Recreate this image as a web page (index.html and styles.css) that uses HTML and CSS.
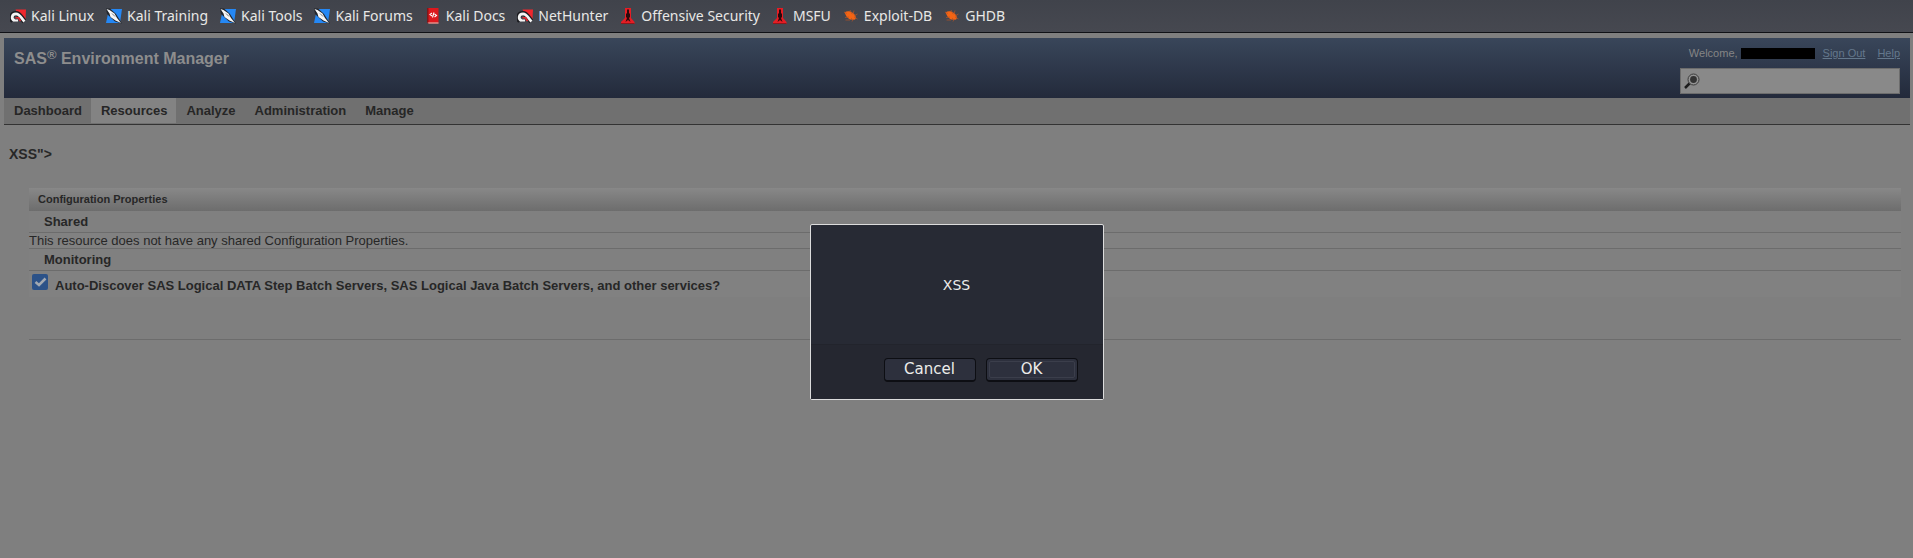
FILE: index.html
```html
<!DOCTYPE html>
<html lang="en">
<head>
<meta charset="utf-8">
<title>SAS Environment Manager</title>
<link rel="stylesheet" href="styles.css">
</head>
<body>
<svg class="defs" aria-hidden="true">
  <symbol id="i-magnet" viewBox="0 0 16 16">
    <path d="M5.500 1.500H16L15.500 11L12 14Z" fill="#f0272d"/>
    <path d="M3 13C.5 10.500 1.500 5.500 6 5.500C10 5.500 11 10 14.500 13.500" fill="none" stroke="#1b1b1f" stroke-width="5"/>
    <path d="M4.500 12.500C1 11 1.500 6 6 5.800C10 5.800 11 10 14.500 13.500" fill="none" stroke="#f4f4f4" stroke-width="2.800"/>
    <path d="M4 12.500H8" stroke="#f4f4f4" stroke-width="2"/>
    <path d="M5.500 9.800H8.500L10.500 13" fill="none" stroke="#e8252b" stroke-width="1.600"/>
  </symbol>
  <symbol id="i-knife" viewBox="0 0 16 16">
    <path d="M3 1H16L14 15H0Z" fill="#2588f5"/>
    <path d="M0 .5L4 .5L10 6L16 15.500L9 13.500L1 6Z" fill="#22252b"/>
    <path d="M.5 1L3.500 2L8.500 5.500L11 10L15 15L9.500 12.500L4.500 9L3.500 5.500Z" fill="#f7f7f7"/>
    <path d="M6 5.500L9 8.500" stroke="#777d86"/>
  </symbol>
  <symbol id="i-docs" viewBox="0 0 16 16">
    <path d="M2 0H13.500V15.500H3.500L2 14Z" fill="#dd181d"/>
    <path d="M2 0H3.500V15L2 14Z" fill="#811619"/>
    <path d="M3 14.500H13.500V15.500H3.500Z" fill="#e5c7bd"/>
    <path d="M7 5L5 6.500L7 8M9.500 6L11.500 7.500L9.500 9M9 4.500L7.500 9.500" fill="none" stroke="#fff" stroke-width="1.100"/>
  </symbol>
  <symbol id="i-tower" viewBox="0 0 16 16">
    <path d="M5 0H11V10L14.500 14V16H1V14L5 10Z" fill="#e51d24"/>
    <path d="M7 2L8 1L9 2V5L10 6V9L9 10L10.500 14L8 12L5.500 14L7 10L6 9V6L7 5Z" fill="#29090b"/>
    <path d="M1 15.500H14.500" stroke="#8e171b"/>
  </symbol>
  <symbol id="i-bug" viewBox="0 0 16 16">
    <path d="M1.500 4.500C4 2.800 7 3 10 5C13 7.500 13.500 10 12 11.500C9 12.500 5 11 3.500 8.500Z" fill="#f36414"/>
    <path d="M1 4L4 5.500M2 9.500L6 9M2.500 12H7L9 10M9 13.500L10.500 11M7 2L9 6M11 2.500L10 6.500M14.500 6L11 8M14.500 11L11 9" fill="none" stroke="#b65325" stroke-width=".7"/>
  </symbol>
</svg>
<nav class="bookmarks" aria-label="Bookmarks">
  <a href="#"><svg><use href="#i-magnet"/></svg>Kali Linux</a>
  <a href="#"><svg><use href="#i-knife"/></svg>Kali Training</a>
  <a href="#"><svg><use href="#i-knife"/></svg>Kali Tools</a>
  <a href="#"><svg><use href="#i-knife"/></svg>Kali Forums</a>
  <a href="#"><svg><use href="#i-docs"/></svg>Kali Docs</a>
  <a href="#"><svg><use href="#i-magnet"/></svg>NetHunter</a>
  <a href="#"><svg><use href="#i-tower"/></svg>Offensive Security</a>
  <a href="#"><svg><use href="#i-tower"/></svg>MSFU</a>
  <a href="#"><svg><use href="#i-bug"/></svg>Exploit-DB</a>
  <a href="#"><svg><use href="#i-bug"/></svg>GHDB</a>
</nav>
<div class="page">
  <header class="banner">
    <div class="brand">SAS<sup>®</sup> Environment Manager</div>
    <div class="tools">
      <div class="account"><span>Welcome,</span><span class="redacted"></span><a href="#">Sign Out</a><a href="#">Help</a></div>
      <label class="search">
        <svg viewBox="0 0 16 16" aria-hidden="true"><path d="M1 15L6 10" stroke="#1c1c1c" stroke-width="2.500"/><circle cx="9.500" cy="6.500" r="5.500" fill="#939393" stroke="#3c3c3c"/><circle cx="9.500" cy="6.500" r="3.400" fill="#333"/></svg>
        <input type="text" aria-label="Search">
      </label>
    </div>
  </header>
  <nav class="tabs" aria-label="Main">
    <a href="#">Dashboard</a>
    <a href="#" class="active">Resources</a>
    <a href="#">Analyze</a>
    <a href="#">Administration</a>
    <a href="#">Manage</a>
  </nav>
  <main class="content">
    <h1>XSS"&gt;</h1>
    <section class="props">
      <h2>Configuration Properties</h2>
      <h3>Shared</h3>
      <p>This resource does not have any shared Configuration Properties.</p>
      <h3>Monitoring</h3>
      <label class="option">
        <input type="checkbox" checked>
        <svg class="tick" viewBox="0 0 16 16" aria-hidden="true"><path d="M3.500 8L7 11L13.500 4.500" fill="none" stroke="#a3a9b1" stroke-width="2.500"/></svg>
        <span>Auto-Discover SAS Logical DATA Step Batch Servers, SAS Logical Java Batch Servers, and other services?</span>
      </label>
      <div class="spacer"></div>
    </section>
  </main>
</div>
<div class="overlay">
  <div class="dialog" role="alertdialog" aria-modal="true" aria-labelledby="msg">
    <div class="message" id="msg">XSS</div>
    <div class="actions">
      <button type="button">Cancel</button>
      <button type="button" class="default"><span>OK</span></button>
    </div>
  </div>
</div>
</body>
</html>
```
FILE: styles.css
```css
* { box-sizing: border-box; }
body {
  margin: 0;
  min-height: 100vh;
  background: #7f7f7f;
  color: #272727;
  font: 13px/15px "Liberation Sans", Arial, sans-serif;
}
.defs { position: absolute; width: 0; height: 0; }
.bookmarks {
  display: flex;
  gap: 12px;
  height: 33px;
  padding: 0 10px;
  align-items: center;
  background: linear-gradient(#40434b, #464850);
  border-bottom: 1px solid #101116;
  font: 14px/20px "Noto Sans", "Open Sans", sans-serif;
}
.bookmarks a {
  display: flex;
  align-items: center;
  gap: 5px;
  color: #e8e8e6;
  text-decoration: none;
  white-space: nowrap;
}
.bookmarks svg { width: 16px; height: 16px; flex: none; }
.page { padding: 5px 3px 0 4px; }
.banner {
  display: flex;
  justify-content: space-between;
  height: 60px;
  padding: 9px 10px 0;
  background: linear-gradient(#39465a, #232a3b);
}
.brand { color: #8d8d8d; font-size: 16px; font-weight: bold; line-height: 23px; }
.brand sup { font-size: 13px; line-height: 0; vertical-align: 5px; }
.tools { display: flex; flex-direction: column; align-items: flex-end; gap: 8px; }
.account { display: flex; align-items: center; height: 13px; color: #858585; font-size: 11px; line-height: 13px; }
.account a { color: #64788c; margin-left: 12px; }
.account a:nth-of-type(1) { margin-left: 8px; }
.redacted { width: 74px; height: 11px; margin-left: 3px; background: #000; }
.search {
  display: flex;
  width: 220px;
  height: 26px;
  padding: 4px 3px;
  background: #898989;
  border: 1px solid #6c6c6c;
}
.search svg { width: 16px; height: 16px; flex: none; }
.search input { flex: 1; min-width: 0; border: 0; background: transparent; outline: 0; }
.tabs {
  display: flex;
  height: 27px;
  padding-bottom: 1px;
  background: #707070;
  border-bottom: 1px solid #333;
}
.tabs a { padding: 0 9px 0 10px; color: #262626; font-weight: bold; line-height: 25px; text-decoration: none; }
.tabs .active { background: #838383; }
.content { padding: 20px 9px 0 5px; }
h1, h2, h3, p { margin: 0; }
h1 { font-size: 14px; line-height: 18px; }
.props { margin: 25px 0 0 20px; background: #818181; }
.props h2 {
  height: 23px;
  padding-left: 9px;
  background: linear-gradient(#888, #6d6d6d);
  font-size: 11px;
  line-height: 22px;
}
.props h3 { padding-left: 15px; border-bottom: 1px solid #6c6c6c; background: #808080; font-size: 13px; line-height: 21px; }
.props p { border-bottom: 1px solid #6c6c6c; }
.option {
  display: grid;
  grid-template-columns: 16px 1fr;
  column-gap: 7px;
  height: 26px;
  padding: 3px 0 0 3px;
  font-weight: bold;
}
.option input, .tick { grid-area: 1 / 1; width: 16px; height: 16px; margin: 0; }
.option input { appearance: none; border-radius: 2px; background: #2c5288; }
.option span { grid-area: 1 / 2; padding-top: 4px; line-height: 15px; }
.spacer { height: 43px; background: #7f7f7f; border-bottom: 1px solid #6c6c6c; }
.overlay { position: absolute; inset: 224px 0 auto; display: flex; justify-content: center; }
.dialog {
  width: 294px;
  border: 1px solid #dcdcdc;
  border-radius: 2px;
  background: #272a34;
  color: #ececea;
  font: 14px/20px "DejaVu Sans", sans-serif;
}
.message { padding: 50px 0 49px; text-align: center; }
.actions { display: flex; justify-content: flex-end; gap: 10px; padding: 13px 25px 17px; border-top: 1px solid #22242c; background: #252730; }
button {
  width: 92px;
  height: 24px;
  padding: 2px;
  border: 1px solid #0d0e13;
  border-bottom-width: 2px;
  border-radius: 4px;
  background: #2d303d;
  color: inherit;
  font: 15px/17px "DejaVu Sans", sans-serif;
}
.default span { display: block; height: 17px; border: 1px solid #3b3e4b; border-radius: 2px; line-height: 15px; }
```
